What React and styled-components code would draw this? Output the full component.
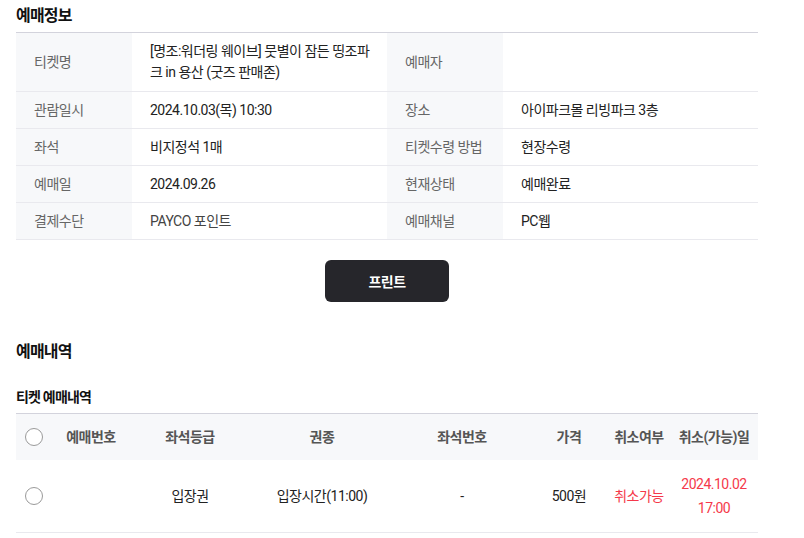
import React from 'react';
import styled, {createGlobalStyle} from 'styled-components';

const GlobalStyle = createGlobalStyle`
    body {
        margin: 0;
        background: #fff;
        font-family: Roboto, "Noto Sans CJK KR", sans-serif;
        color: #222;
        letter-spacing: -0.5px;
    }
`;

const Page = styled.div `
    width: 742px;
    padding: 6px 0 0 16px;
`;
const SectionTitle = styled.h2 `
    margin: 0;
    font-size: 16px;
    font-weight: 700;
    line-height: 20px;
    color: #111;
    letter-spacing: -0.8px;
`;
const SubTitle = styled.h3 `
    margin: 0;
    font-size: 14px;
    font-weight: 700;
    line-height: 18px;
    color: #111;
    letter-spacing: -0.8px;
`;
const InfoTable = styled.div `
    margin-top: 6px;
    border-top: 1px solid #d3d3dc;
    display: grid;
    grid-template-columns: 116px 255px 116px 255px;
`;
const Cell = styled.div `
    display: flex;
    align-items: center;
    padding: ${p => p.tall ? '8px' : '0'} ${p => p.label ? '18px' : '8px'} ${p => p.tall ? '8px' : '0'} 18px;
    height: ${p => p.tall ? '59px' : '37px'};
    box-sizing: border-box;
    border-bottom: 1px solid #e9e9ee;
    background: ${p => p.label ? '#f7f8fa' : '#fff'};
    color: ${p => p.label ? '#666' : (p.muted ? '#444' : '#222')};
    font-size: 14px;
    line-height: 21px;
    white-space: ${p => p.label ? 'nowrap' : 'normal'};
`;
const ButtonRow = styled.div `
    display: flex;
    justify-content: center;
    margin-top: 20px;
`;
const PrintButton = styled.button `
    width: 124px;
    height: 42px;
    border: none;
    border-radius: 6px;
    background: #26262b;
    color: #fff;
    font-family: inherit;
    font-size: 14px;
    font-weight: 700;
    letter-spacing: -0.5px;
`;
const Spacer = styled.div `
    height: ${p => p.h}px;
`;
const HistoryTable = styled.div `
    margin-top: 7px;
    border-top: 1px solid #d3d3dc;
`;
const Row = styled.div `
    display: grid;
    grid-template-columns: 36px 78px 120px 144px 136px 78px 62px 88px;
    align-items: center;
    height: ${p => p.head ? '46px' : '72px'};
    background: ${p => p.head ? '#f7f8fa' : '#fff'};
    border-bottom: ${p => p.head ? 'none' : '1px solid #e9e9ee'};
`;
const Col = styled.div `
    text-align: center;
    font-size: 14px;
    line-height: 24px;
    font-weight: ${p => p.head ? 700 : 400};
    color: ${p => p.head ? '#555' : (p.red ? '#f5394a' : '#222')};
    white-space: nowrap;
`;
const Radio = styled.span `
    display: block;
    width: 18px;
    height: 18px;
    margin-left: 9px;
    border: 1px solid #9a9a9a;
    border-radius: 50%;
    box-sizing: border-box;
    background: #fff;
`;

const info = [
    ['티켓명', '[명조:워더링 웨이브] 뭇별이 잠든 띵조파크 in 용산 (굿즈 판매존)', '예매자', ''],
    ['관람일시', '2024.10.03(목) 10:30', '장소', '아이파크몰 리빙파크 3층'],
    ['좌석', '비지정석 1매', '티켓수령 방법', '현장수령'],
    ['예매일', '2024.09.26', '현재상태', '예매완료'],
    ['결제수단', 'PAYCO 포인트', '예매채널', 'PC웹'],
];

function App() {
    return (
        <Page>
            <GlobalStyle />
            <SectionTitle>예매정보</SectionTitle>
            <InfoTable>
                {info.map((r, i) => (
                    <React.Fragment key={i}>
                        <Cell label tall={i === 0}>{r[0]}</Cell>
                        <Cell tall={i === 0} muted={i === 4}>{r[1]}</Cell>
                        <Cell label tall={i === 0}>{r[2]}</Cell>
                        <Cell tall={i === 0}>{r[3]}</Cell>
                    </React.Fragment>
                ))}
            </InfoTable>
            <ButtonRow>
                <PrintButton>프린트</PrintButton>
            </ButtonRow>
            <Spacer h={40} />
            <SectionTitle>예매내역</SectionTitle>
            <Spacer h={26} />
            <SubTitle>티켓 예매내역</SubTitle>
            <HistoryTable>
                <Row head>
                    <Radio />
                    <Col head>예매번호</Col>
                    <Col head>좌석등급</Col>
                    <Col head>권종</Col>
                    <Col head>좌석번호</Col>
                    <Col head>가격</Col>
                    <Col head>취소여부</Col>
                    <Col head>취소(가능)일</Col>
                </Row>
                <Row>
                    <Radio />
                    <Col></Col>
                    <Col>입장권</Col>
                    <Col>입장시간(11:00)</Col>
                    <Col>-</Col>
                    <Col>500원</Col>
                    <Col red>취소가능</Col>
                    <Col red>2024.10.02<br />17:00</Col>
                </Row>
            </HistoryTable>
        </Page>
    );
}
export default App;
